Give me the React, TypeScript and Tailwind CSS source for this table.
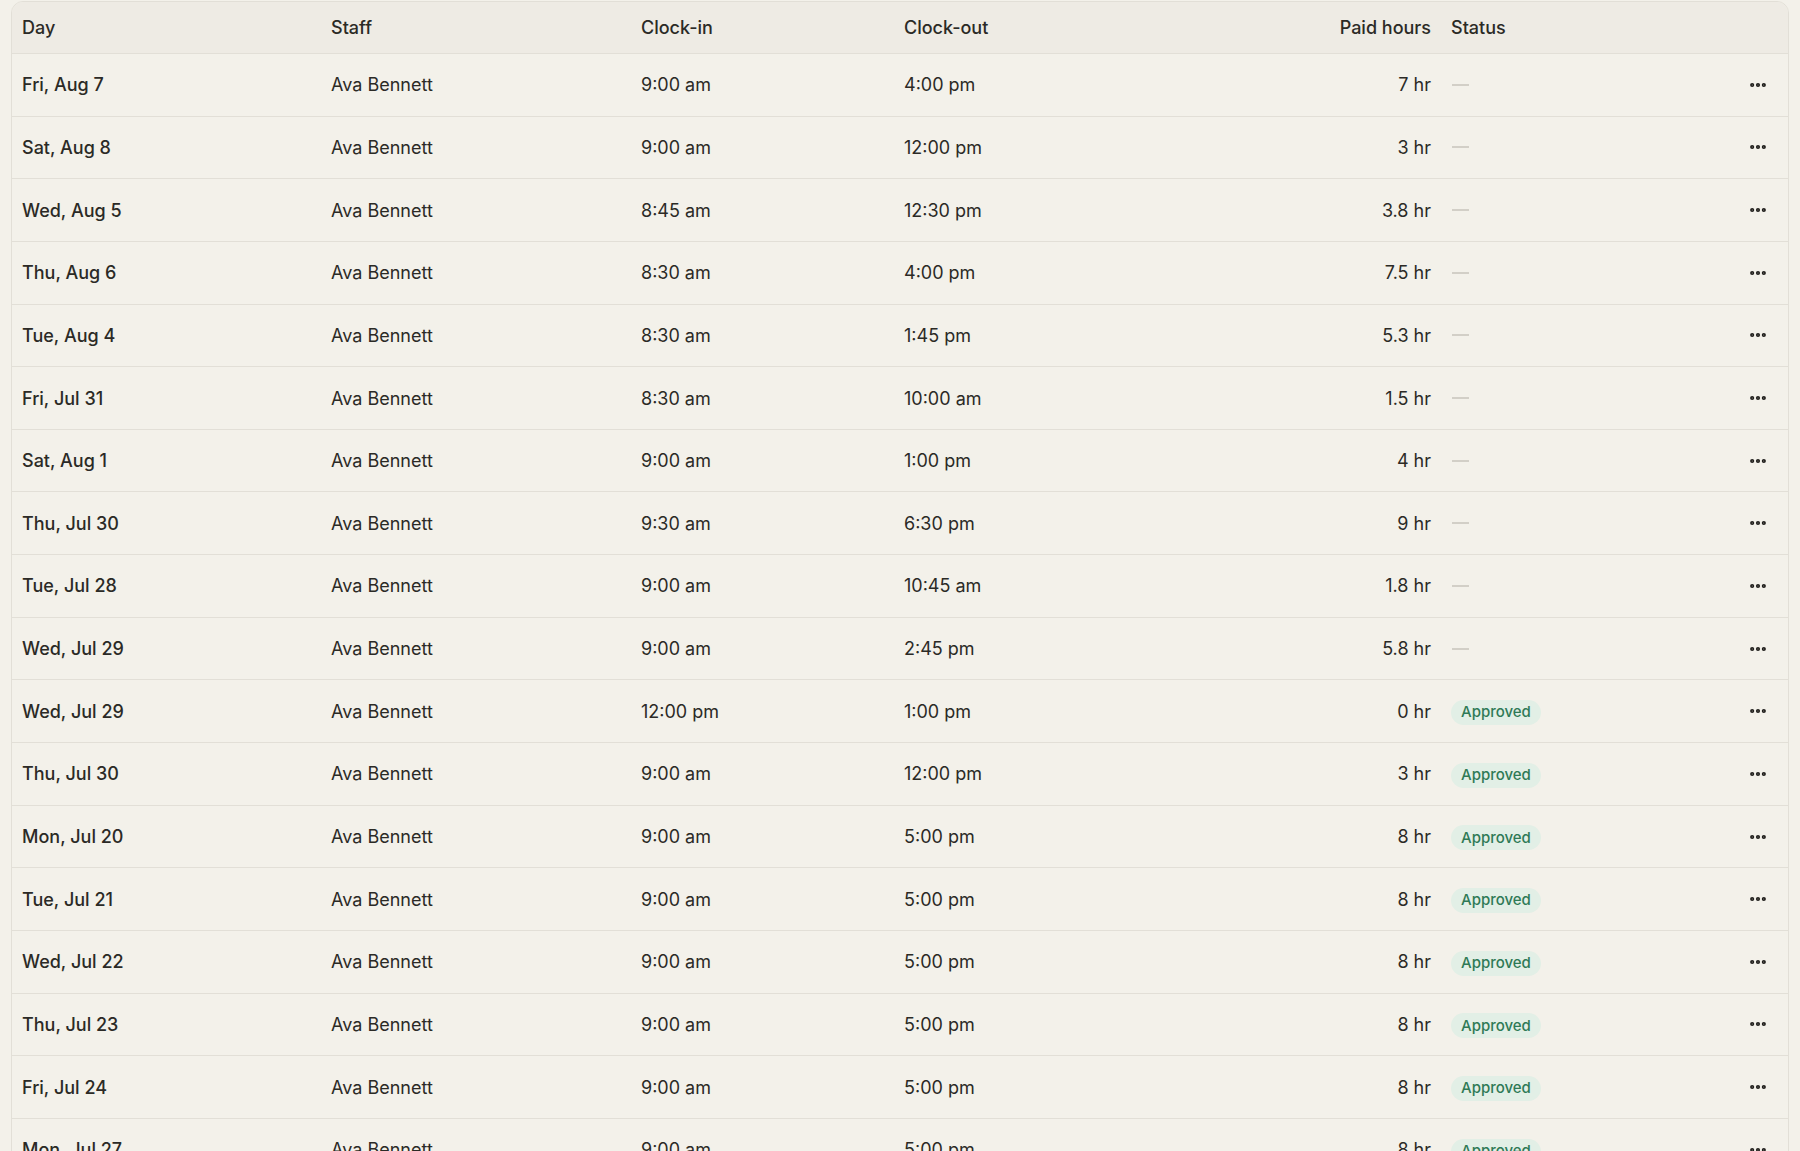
import { MoreHorizontal } from "lucide-react"

type Shift = {
  day: string
  staff: string
  clockIn: string
  clockOut: string
  paid: string
  approved: boolean
}

const shifts: Shift[] = [
  { day: "Fri, Aug 7", staff: "Ava Bennett", clockIn: "9:00 am", clockOut: "4:00 pm", paid: "7 hr", approved: false },
  { day: "Sat, Aug 8", staff: "Ava Bennett", clockIn: "9:00 am", clockOut: "12:00 pm", paid: "3 hr", approved: false },
  { day: "Wed, Aug 5", staff: "Ava Bennett", clockIn: "8:45 am", clockOut: "12:30 pm", paid: "3.8 hr", approved: false },
  { day: "Thu, Aug 6", staff: "Ava Bennett", clockIn: "8:30 am", clockOut: "4:00 pm", paid: "7.5 hr", approved: false },
  { day: "Tue, Aug 4", staff: "Ava Bennett", clockIn: "8:30 am", clockOut: "1:45 pm", paid: "5.3 hr", approved: false },
  { day: "Fri, Jul 31", staff: "Ava Bennett", clockIn: "8:30 am", clockOut: "10:00 am", paid: "1.5 hr", approved: false },
  { day: "Sat, Aug 1", staff: "Ava Bennett", clockIn: "9:00 am", clockOut: "1:00 pm", paid: "4 hr", approved: false },
  { day: "Thu, Jul 30", staff: "Ava Bennett", clockIn: "9:30 am", clockOut: "6:30 pm", paid: "9 hr", approved: false },
  { day: "Tue, Jul 28", staff: "Ava Bennett", clockIn: "9:00 am", clockOut: "10:45 am", paid: "1.8 hr", approved: false },
  { day: "Wed, Jul 29", staff: "Ava Bennett", clockIn: "9:00 am", clockOut: "2:45 pm", paid: "5.8 hr", approved: false },
  { day: "Wed, Jul 29", staff: "Ava Bennett", clockIn: "12:00 pm", clockOut: "1:00 pm", paid: "0 hr", approved: true },
  { day: "Thu, Jul 30", staff: "Ava Bennett", clockIn: "9:00 am", clockOut: "12:00 pm", paid: "3 hr", approved: true },
  { day: "Mon, Jul 20", staff: "Ava Bennett", clockIn: "9:00 am", clockOut: "5:00 pm", paid: "8 hr", approved: true },
  { day: "Tue, Jul 21", staff: "Ava Bennett", clockIn: "9:00 am", clockOut: "5:00 pm", paid: "8 hr", approved: true },
  { day: "Wed, Jul 22", staff: "Ava Bennett", clockIn: "9:00 am", clockOut: "5:00 pm", paid: "8 hr", approved: true },
  { day: "Thu, Jul 23", staff: "Ava Bennett", clockIn: "9:00 am", clockOut: "5:00 pm", paid: "8 hr", approved: true },
  { day: "Fri, Jul 24", staff: "Ava Bennett", clockIn: "9:00 am", clockOut: "5:00 pm", paid: "8 hr", approved: true },
  { day: "Mon, Jul 27", staff: "Ava Bennett", clockIn: "9:00 am", clockOut: "5:00 pm", paid: "8 hr", approved: true },
]

const cols = "grid grid-cols-[309px_310px_263px_347px_200px_1fr_88px] items-center"

export default function App() {
  return (
    <div className="min-h-screen bg-[#f3f1ea] px-[11px] pt-px font-['Inter','Liberation_Sans',sans-serif] text-[18px] text-[#2b2a26]">
      <div className="overflow-hidden rounded-t-[12px] border border-[#e2dfd7] bg-[#f3f1ea]">
        <div className={`${cols} h-[52px] border-b border-[#e2dfd7] bg-[#eeebe4] font-medium`}>
          <div className="px-2.5">Day</div>
          <div className="px-2.5">Staff</div>
          <div className="px-2.5">Clock-in</div>
          <div className="px-2.5">Clock-out</div>
          <div className="px-2.5 text-right">Paid hours</div>
          <div className="px-2.5">Status</div>
          <div />
        </div>
        {shifts.map((s, i) => (
          <ShiftRow key={i} shift={s} />
        ))}
      </div>
    </div>
  )
}

function ShiftRow({ shift }: { shift: Shift }) {
  return (
    <div className={`${cols} h-[62.65px] border-b border-[#e2dfd7]`}>
      <div className="px-2.5 font-medium">{shift.day}</div>
      <div className="px-2.5">{shift.staff}</div>
      <div className="px-2.5">{shift.clockIn}</div>
      <div className="px-2.5">{shift.clockOut}</div>
      <div className="px-2.5 text-right">{shift.paid}</div>
      <div className="px-2.5">
        {shift.approved ? (
          <span className="inline-flex h-[25px] items-center rounded-full bg-[#e2efe6] px-2.5 text-[15px] font-medium text-[#2f7a56]">
            Approved
          </span>
        ) : (
          <div className="ml-px h-[2px] w-[17px] bg-[#d2cfc7]" />
        )}
      </div>
      <div className="flex justify-end pr-[14px]">
        <button type="button" className="flex h-7 w-8 items-center justify-center rounded text-[#1f1e1b]">
          <MoreHorizontal size={20} strokeWidth={3} />
        </button>
      </div>
    </div>
  )
}
